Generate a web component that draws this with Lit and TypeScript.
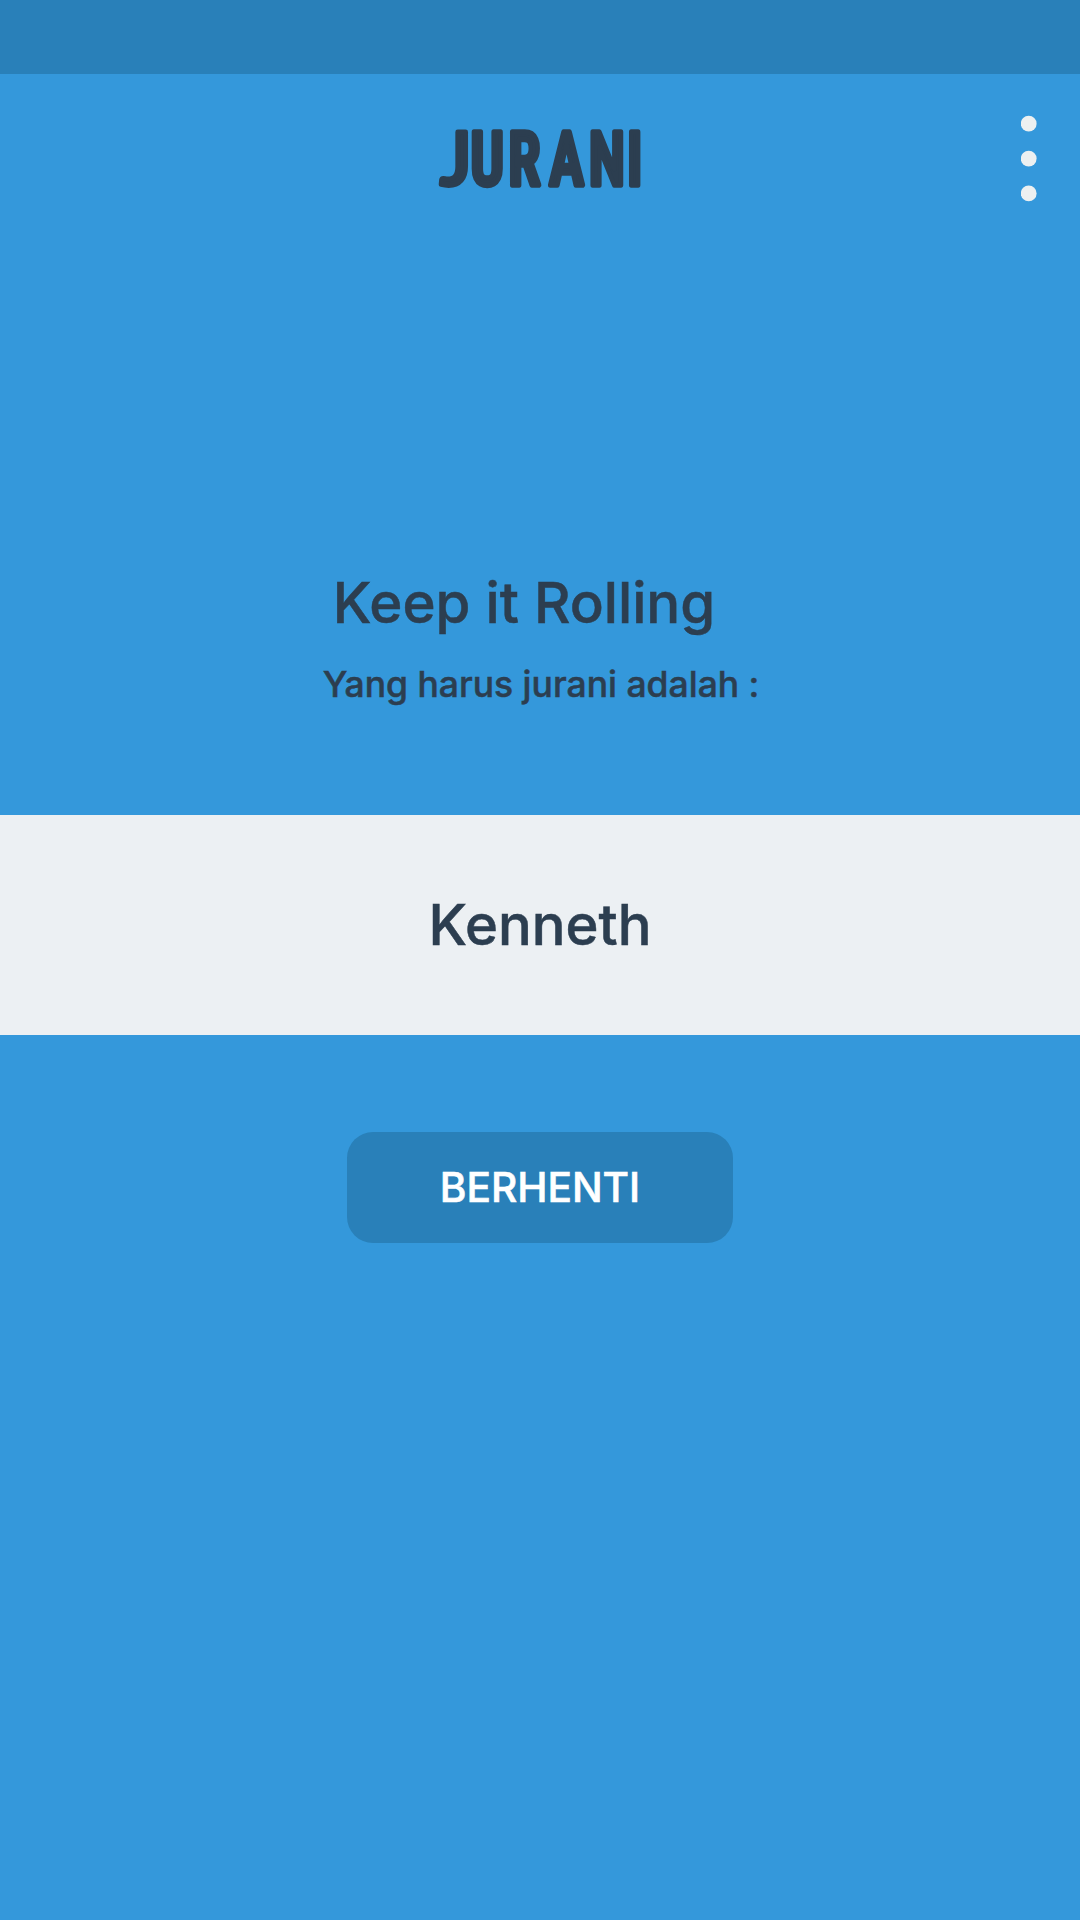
import { LitElement, html, css } from "lit";
import { customElement, property } from "lit/decorators.js";

@customElement("app-header")
export class AppHeader extends LitElement {
  static styles = css`
    :host { display: grid; grid-template-columns: 1fr auto 1fr; align-items: center; height: 169px; }
    .logo { grid-column: 2; display: block; width: 204px; height: 64px; overflow: visible; }
    .logo text {
      font-family: "Roboto Condensed", Roboto, sans-serif; font-weight: 500; font-size: 74.5px;
      fill: #2c3e50; stroke: #2c3e50; stroke-width: 5.6px; stroke-linejoin: round;
      -webkit-text-stroke: 0;
    }
    .logo .initial { font-family: Lato, sans-serif; font-size: 74px; stroke-width: 4.8px; }
    .menu { justify-self: end; margin: 0 43px 0 0; padding: 0; border: 0; background: none; }
    .dots { display: block; width: 16px; height: 87px; fill: #ecf0f1; }
  `;
  render() {
    return html`
      <svg class="logo" viewBox="0 0 204 64" role="img" aria-label="JURANI">
        <text class="initial" x="2.3" y="58.2">J</text>
        <text transform="scale(0.79 1)" x="41.2 88.8 140.8 190.8 239.2" y="58.2">URANI</text>
      </svg>
      <button class="menu" aria-label="Menu">
        <svg class="dots" viewBox="0 0 16 87">
          <circle cx="7.7" cy="8.7" r="7.9" /><circle cx="7.7" cy="43.6" r="7.9" /><circle cx="7.7" cy="78.4" r="7.9" />
        </svg>
      </button>
    `;
  }
}

@customElement("app-root")
export class AppRoot extends LitElement {
  @property() name = "Kenneth";

  static styles = css`
    :host {
      display: flex; flex-direction: column; min-height: 1920px;
      background: #3498db; color: #2c3e50;
      font-family: Inter, "Open Sans", sans-serif; font-weight: 500;
      -webkit-text-stroke: 0.5px currentColor;
    }
    .status { height: 74px; background: #2980b9; }
    .intro {
      box-sizing: border-box; height: 571.5px; padding-top: 328px;
      display: flex; flex-direction: column; align-items: center; gap: 28px; white-space: nowrap;
    }
    .title { margin: 0 32px 0 0; font: inherit; font-size: 56.4px; line-height: 64px; }
    .subtitle { margin: 0 0 0 2px; font-size: 35.5px; line-height: 44px; }
    .band {
      height: 220.5px; display: flex; align-items: center; justify-content: center;
      background: #ecf0f3; font-size: 56.2px; line-height: 64px;
    }
    .stop {
      align-self: center; box-sizing: border-box; width: 386px; height: 110.5px; margin-top: 97px;
      padding: 1px 0 0; border: 0; border-radius: 26px; background: #2980b9; color: #fff;
      font: inherit; font-size: 40.6px; line-height: 48px; -webkit-text-stroke: 0.6px #fff;
    }
  `;
  render() {
    return html`
      <div class="status"></div>
      <app-header></app-header>
      <section class="intro">
        <h1 class="title">Keep it Rolling</h1>
        <p class="subtitle">Yang harus jurani adalah :</p>
      </section>
      <div class="band">${this.name}</div>
      <button class="stop">BERHENTI</button>
    `;
  }
}
